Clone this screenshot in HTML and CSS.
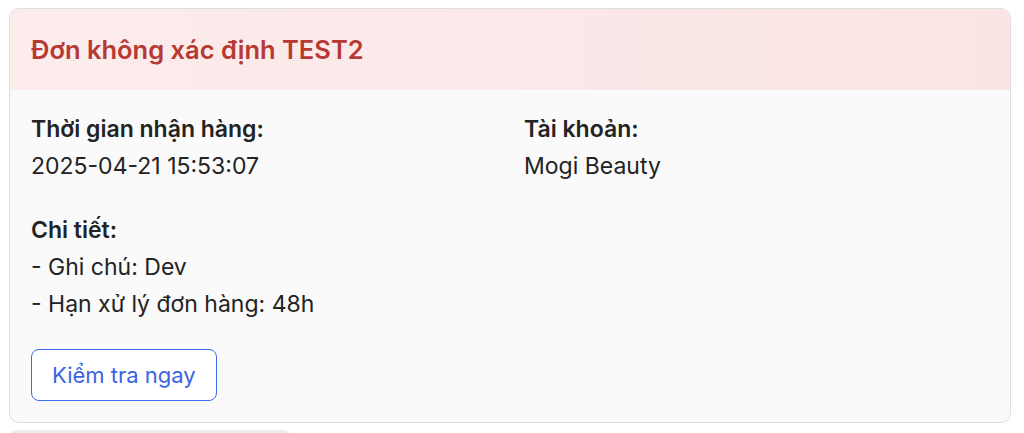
FILE: index.html
```html
<!DOCTYPE html>
<html lang="vi">
<head>
    <meta charset="UTF-8">
    <meta name="viewport" content="width=device-width, initial-scale=1.0">
    <title>Đơn không xác định</title>
    <link rel="stylesheet" href="styles.css">
</head>
<body>

    <div class="order-card">
        <div class="order-header">
            <h2>Đơn không xác định TEST2</h2>
        </div>

        <div class="order-body">
            <div class="info-grid">
                <div class="info-item">
                    <div class="label">Thời gian nhận hàng:</div>
                    <div class="value">2025-04-21 15:53:07</div>
                </div>
                <div class="info-item">
                    <div class="label">Tài khoản:</div>
                    <div class="value">Mogi Beauty</div>
                </div>
            </div>

            <div class="details">
                <div class="label">Chi tiết:</div>
                <div class="value">- Ghi chú: Dev</div>
                <div class="value">- Hạn xử lý đơn hàng: 48h</div>
            </div>

            <button class="check-button">Kiểm tra ngay</button>
        </div>
    </div>

    <!-- next card, only its top edge is visible -->
    <div class="next-card"></div>

</body>
</html>
```

FILE: styles.css
```css
body {
    margin: 0;
    padding: 8px 13px 0 9px;
    font-family: Inter, "Noto Sans", sans-serif;
    background: #ffffff;
    color: #232323;
}

.order-card {
    background: #fafafa;
    border: 1px solid #dedede;
    border-radius: 10px;
    overflow: hidden;
}

.order-header {
    height: 81px;
    display: flex;
    align-items: center;
    padding: 0 21px;
    background: linear-gradient(to right, #fcecec, #fbe4e4);
}

.order-header h2 {
    margin: 0;
    font-size: 25.5px;
    font-weight: 600;
    color: #b63a33;
}

.order-body {
    padding: 21px 21px 21px;
}

.info-grid {
    display: grid;
    grid-template-columns: 1fr 1fr;
    column-gap: 28px;
}

.label {
    font-size: 23px;
    font-weight: 600;
    line-height: 37px;
}

.value {
    font-size: 23px;
    line-height: 37px;
}

.details {
    margin-top: 27px;
}

.check-button {
    display: block;
    margin-top: 26px;
    height: 52px;
    padding: 0 20px;
    font-family: inherit;
    font-size: 22px;
    color: #3a63e6;
    background: #ffffff;
    border: 1.5px solid #3d6bee;
    border-radius: 8px;
    cursor: pointer;
}

.next-card {
    margin-top: 7px;
    width: 282px;
    height: 20px;
    background: #ececec;
    border-radius: 8px 8px 0 0;
}
```
